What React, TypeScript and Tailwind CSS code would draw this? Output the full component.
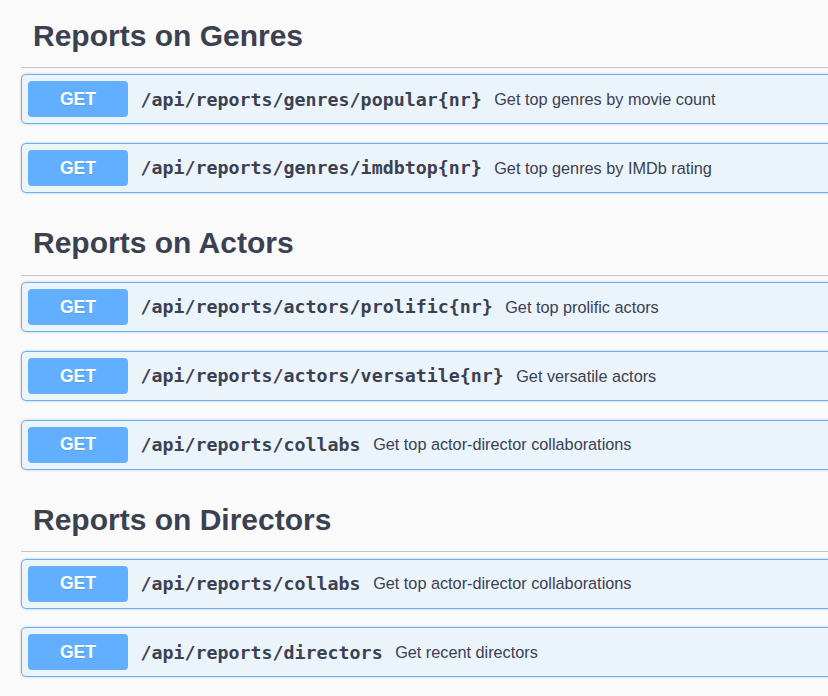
type Endpoint = {
  path: string;
  summary: string;
};

type Section = {
  title: string;
  endpoints: Endpoint[];
};

const sections: Section[] = [
  {
    title: "Reports on Genres",
    endpoints: [
      { path: "/api/reports/genres/popular{nr}", summary: "Get top genres by movie count" },
      { path: "/api/reports/genres/imdbtop{nr}", summary: "Get top genres by IMDb rating" },
    ],
  },
  {
    title: "Reports on Actors",
    endpoints: [
      { path: "/api/reports/actors/prolific{nr}", summary: "Get top prolific actors" },
      { path: "/api/reports/actors/versatile{nr}", summary: "Get versatile actors" },
      { path: "/api/reports/collabs", summary: "Get top actor-director collaborations" },
    ],
  },
  {
    title: "Reports on Directors",
    endpoints: [
      { path: "/api/reports/collabs", summary: "Get top actor-director collaborations" },
      { path: "/api/reports/directors", summary: "Get recent directors" },
    ],
  },
];

const OpBlock = ({ endpoint }: { endpoint: Endpoint }) => {
  return (
    <div className="mb-[18.75px] flex h-[50px] items-center rounded-[5px] border border-[#61affe] bg-[#ebf3fb] px-[6px] shadow-[0_0_3px_rgba(0,0,0,0.19)]">
      <span className="flex h-[36px] w-[100px] shrink-0 items-center justify-center rounded-[4px] bg-[#61affe] font-['Liberation_Sans',Arial,sans-serif] text-[17.5px] font-bold text-white [text-shadow:0_1px_0_rgba(0,0,0,0.1)]">
        GET
      </span>
      <span className="whitespace-nowrap px-[12.5px] font-['DejaVu_Sans_Mono',monospace] text-[18.3px] font-semibold text-[#3b4151]">
        {endpoint.path}
      </span>
      <span className="whitespace-nowrap font-['Liberation_Sans',Arial,sans-serif] text-[16.25px] text-[#3b4151]">
        {endpoint.summary}
      </span>
    </div>
  );
};

export default function App() {
  return (
    <div className="h-[696px] w-[828px] overflow-hidden bg-[#fafafa] pl-[21px] pt-[4px]">
      <div className="w-[860px]">
        {sections.map((section) => (
          <div key={section.title}>
            <h3 className="mb-[6.25px] border-b border-[rgba(59,65,81,0.3)] pb-[12.5px] pl-[12px] pt-[12.5px] font-['Liberation_Sans',Arial,sans-serif] text-[30px] leading-[38px] font-bold text-[#3b4151]">
              {section.title}
            </h3>
            {section.endpoints.map((endpoint, i) => (
              <OpBlock key={section.title + i} endpoint={endpoint} />
            ))}
          </div>
        ))}
      </div>
    </div>
  );
}
